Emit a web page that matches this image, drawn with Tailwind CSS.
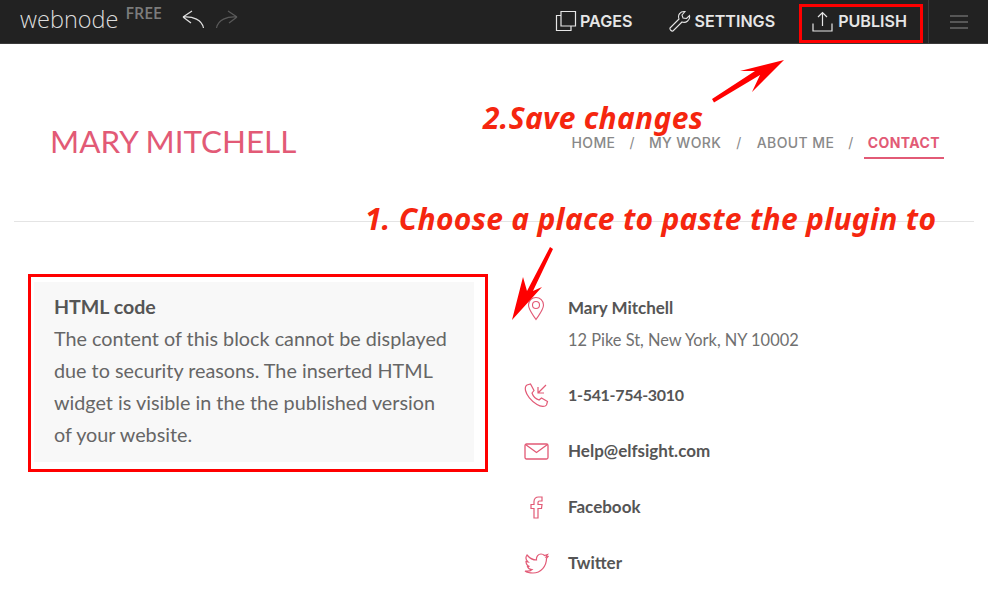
<!DOCTYPE html>
<html lang="en">
<head>
<meta charset="utf-8">
<script src="https://cdn.jsdelivr.net/npm/@tailwindcss/browser@4"></script>
<title>Webnode editor</title>
</head>
<body class="bg-white font-['Lato',sans-serif] overflow-hidden">
<div class="relative w-[988px] h-[591px] overflow-hidden">
  <header class="h-[44px] bg-[#222222] border-b border-[#3a3a3a] flex items-center text-[#e6e6e6]">
    <span class="ml-[20px] text-[23.500px] font-light leading-none text-[#dddddd] font-['Open_Sans',sans-serif] -mt-[3px]">webnode</span>
    <span class="ml-[7px] -mt-[18px] text-[16px] font-semibold text-[#7c7c7c] font-['Open_Sans',sans-serif] leading-none">FREE</span>
    <svg class="ml-[20px] -mt-[4px]" width="24" height="24" viewBox="0 0 24 24" fill="none" stroke="#e0e0e0" stroke-width="1.200"><path d="M1 9 L10 3 M1 9 L9 15 M1 9 C11 8 20 12 21.500 20"/></svg>
    <svg class="ml-[8px] -mt-[4px]" width="24" height="24" viewBox="0 0 24 24" fill="none" stroke="#5a5a5a" stroke-width="1.200"><path d="M23 9 L14 3 M23 9 L15 15 M23 9 C13 8 4 12 2.500 20"/></svg>
    <nav class="ml-auto flex items-center h-full font-['Inter',sans-serif] text-[16.100px] font-semibold">
      <div class="flex items-center gap-[3px]">
        <svg width="22" height="22" viewBox="0 0 22 22" fill="none" stroke="#e6e6e6" stroke-width="1.200"><path d="M6 1.500 H20.500 V16 H6 Z"/><path d="M6 5.500 H1.500 V20.500 H16 V16"/></svg>
        <span>PAGES</span>
      </div>
      <div class="ml-[37px] flex items-center gap-[3px]">
        <svg width="22" height="22" viewBox="0 0 22 22" fill="none" stroke="#e6e6e6" stroke-width="1.100"><path d="M1 18 L10 9 C8.500 5 11 1 16 1.500 L13 5 L14 8 L17.500 8.500 L20.500 5.500 C21.500 10 17 13.500 13 12 L4 21 C2.500 21.500 0.500 19.500 1 18 Z"/></svg>
        <span>SETTINGS</span>
      </div>
      <div class="ml-[37px] flex items-center gap-[5px]">
        <svg width="21" height="21" viewBox="0 0 21 21" fill="none" stroke="#e6e6e6" stroke-width="1.200"><path d="M10.500 15 V1.500 M6 6 L10.500 1.500 L15 6"/><path d="M1 12.500 V20 H20 V12.500"/></svg>
        <span>PUBLISH</span>
      </div>
      <div class="ml-[21px] h-full w-[60px] border-l border-[#3b3b3b] flex items-center justify-center">
        <svg width="18" height="14" viewBox="0 0 18 14" fill="none" stroke="#8c8c8c" stroke-width="1"><path d="M0 1 H18 M0 7 H18 M0 13 H18"/></svg>
      </div>
    </nav>
  </header>

  <div class="flex items-start justify-between pl-[36px] pr-[30px] h-[178px] border-b border-[#e4e4e4] mx-[14px]">
    <h1 class="mt-[75px] text-[31.400px] leading-[44px] text-[#e25a76] font-normal">MARY MITCHELL</h1>
    <nav class="mt-[86px] flex items-start text-[14px] font-medium tracking-[0.4px] text-[#888888] font-['Inter',sans-serif]">
      <span class="pt-[5px] leading-[16px]">HOME</span>
      <span class="pt-[5px] leading-[16px] mx-[14px] font-normal">/</span>
      <span class="pt-[5px] leading-[16px]">MY WORK</span>
      <span class="pt-[5px] leading-[16px] mx-[15px] font-normal">/</span>
      <span class="pt-[5px] leading-[16px]">ABOUT ME</span>
      <span class="pt-[5px] leading-[16px] ml-[14px] mr-[10px] font-normal">/</span>
      <span class="pt-[5px] pb-[6px] px-[4px] leading-[16px] text-[#e25a76] font-bold border-b-2 border-[#e25a76]">CONTACT</span>
    </nav>
  </div>

  <main class="flex items-start">
    <section class="ml-[34px] mt-[60px] w-[440px] h-[180px] bg-[#f8f8f8] px-[20px] pt-[9px] text-[19.800px] leading-[32px] text-[#666666]">
      <h2 class="font-bold text-[#555555] leading-[31px] text-[19.600px]">HTML code</h2>
      <p>The content of this block cannot be displayed due to security reasons. The inserted HTML widget is visible in the the published version of your website.</p>
    </section>
    <ul class="ml-[44px] mt-[70px] flex flex-col text-[17px] text-[#555555]">
      <li class="flex items-start h-[75px]">
        <span class="w-[50px] pr-[14px] flex justify-center pt-[4px]">
          <svg width="18" height="25" viewBox="0 0 18 24" fill="none" stroke="#e25a76" stroke-width="1.100"><path d="M9 23 C5 17 1.500 13 1.500 8.500 C1.500 4 5 1 9 1 C13 1 16.500 4 16.500 8.500 C16.500 13 13 17 9 23 Z"/><circle cx="9" cy="8.500" r="3.500"/></svg>
        </span>
        <div class="leading-[32px]"><div class="font-bold">Mary Mitchell</div><div class="text-[#707070] text-[16.400px]">12 Pike St, New York, NY 10002</div></div>
      </li>
      <li class="flex items-center h-[56px]">
        <span class="w-[50px] pr-[14px] flex justify-center">
          <svg width="25" height="25" viewBox="0 0 25 25" fill="none" stroke="#e25a76" stroke-width="1.200"><path d="M3 2 L6.500 1 L10 7.500 L8 10 C9 13 12 16 15 17 L17.500 15 L23.500 18.500 L22.500 22 C21 24 17 24 13 21.500 C7 18 2.500 12 1.500 7.500 C1 5 1.500 3 3 2 Z"/><path d="M22 2 L14 10 M14 4 V10 H20"/></svg>
        </span>
        <span class="font-bold text-[16px] tracking-[-0.3px]">1-541-754-3010</span>
      </li>
      <li class="flex items-center h-[56px]">
        <span class="w-[50px] pr-[14px] flex justify-center">
          <svg width="25" height="17" viewBox="0 0 25 17" fill="none" stroke="#e25a76" stroke-width="1.300"><rect x="1" y="1" width="23" height="15" rx="1.500"/><path d="M1.500 1.500 L12.500 9.500 L23.500 1.500"/></svg>
        </span>
        <span class="font-bold">Help@elfsight.com</span>
      </li>
      <li class="flex items-center h-[56px]">
        <span class="w-[50px] pr-[14px] flex justify-center">
          <svg width="13" height="23" viewBox="0 0 13 23" fill="none" stroke="#e25a76" stroke-width="1.200"><path d="M4 22 V12.500 H1 V8.500 H4 V5.500 C4 2.500 6 1 8.500 1 H12 V5 H9.500 C8.500 5 8 5.500 8 6.500 V8.500 H12 L11.500 12.500 H8 V22 Z"/></svg>
        </span>
        <span class="font-bold">Facebook</span>
      </li>
      <li class="flex items-center h-[56px]">
        <span class="w-[50px] pr-[14px] flex justify-center">
          <svg width="25" height="21" viewBox="0 0 25 21" fill="none" stroke="#e25a76" stroke-width="1.200"><path d="M1 18 C4 18.500 6.500 18 8 16.500 C5.500 16.500 4 15 3.500 13.500 L5.500 13.500 C3 12.500 2 10.500 2 8.500 L4 9 C2 7 1.500 4 3 2 C5.500 5 9 7 12.500 7 C12 3.500 14.500 1 17 1 C18.500 1 19.500 1.500 20.500 2.500 L23.500 1.500 L22 4 L24 3.500 L22.500 5.500 C22.500 13 17 20 9 20 C6 20 3 19.500 1 18 Z"/></svg>
        </span>
        <span class="font-bold">Twitter</span>
      </li>
    </ul>
  </main>

  <div class="absolute left-[28px] top-[274px] w-[460px] h-[198px] border-[3px] border-[#ff0000]"></div>
  <div class="absolute left-[799px] top-[4px] w-[124px] h-[39px] border-[3px] border-[#ff0000]"></div>

  <svg class="absolute left-0 top-0 pointer-events-none" width="988" height="591" viewBox="0 0 988 591" fill="#ff0000">
    <path d="M712 99 L714 102.500 L760 75 L752 92 L784 60 L740 71 L755 71 Z"/>
    <path d="M550 247 L553 249 L533 291 L542 287 L512 320 L523 277 L527 291 Z"/>
  </svg>

  <div class="absolute left-[483px] top-[103px] text-[30px] leading-[30px] font-bold italic tracking-[0.3px] text-[#f5260f] font-['Noto_Sans',sans-serif] whitespace-nowrap">2.Save changes</div>
  <div class="absolute left-[365px] top-[200px] text-[30px] leading-[38px] font-bold italic tracking-[0.3px] text-[#f5260f] font-['Noto_Sans',sans-serif] whitespace-nowrap">1. Choose a place to paste the plugin to</div>
</div>
</body>
</html>
